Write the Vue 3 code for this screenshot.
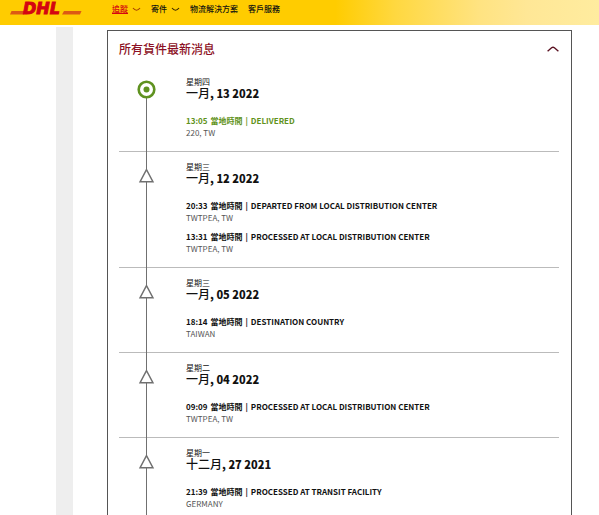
<script setup>
import { ref } from 'vue'

const open = ref(true)

const navItems = [
  { label: '追蹤', menu: true, active: true },
  { label: '寄件', menu: true },
  { label: '物流解決方案' },
  { label: '客戶服務' },
]

const days = [
  {
    weekday: '星期四', month: '一月', rest: ', 13 2022', delivered: true,
    events: [{ time: '13:05', status: 'DELIVERED', place: '220, TW' }],
  },
  {
    weekday: '星期三', month: '一月', rest: ', 12 2022',
    events: [
      { time: '20:33', status: 'DEPARTED FROM LOCAL DISTRIBUTION CENTER', place: 'TWTPEA, TW' },
      { time: '13:31', status: 'PROCESSED AT LOCAL DISTRIBUTION CENTER', place: 'TWTPEA, TW' },
    ],
  },
  {
    weekday: '星期三', month: '一月', rest: ', 05 2022',
    events: [{ time: '18:14', status: 'DESTINATION COUNTRY', place: 'TAIWAN' }],
  },
  {
    weekday: '星期二', month: '一月', rest: ', 04 2022',
    events: [{ time: '09:09', status: 'PROCESSED AT LOCAL DISTRIBUTION CENTER', place: 'TWTPEA, TW' }],
  },
  {
    weekday: '星期一', month: '十二月', rest: ', 27 2021',
    events: [{ time: '21:39', status: 'PROCESSED AT TRANSIT FACILITY', place: 'GERMANY' }],
  },
]
</script>

<template>
  <div class="page">
    <header class="topbar">
      <a class="brand" href="#" aria-label="DHL">
        <svg class="logo" width="72" height="22" viewBox="0 0 72 22" aria-hidden="true">
          <path class="stripe" d="M1.500 11H14V14.400H0Z" />
          <path class="stripe" d="M54 11H71.500L70 14.400H52Z" />
          <text class="logo-text" x="13" y="14">DHL</text>
        </svg>
      </a>
      <nav class="nav">
        <a v-for="item in navItems" :key="item.label" href="#" class="nav-link" :class="{ active: item.active }">
          <span class="nav-label">{{ item.label }}</span>
          <svg v-if="item.menu" class="nav-chevron" width="9" height="6" viewBox="0 0 9 6" aria-hidden="true">
            <path d="M1 2Q4.500 6.500 8 2" />
          </svg>
        </a>
      </nav>
    </header>

    <div class="body">
      <div class="side"></div>
      <main class="card">
        <div class="card-head">
          <h1 class="title">所有貨件最新消息</h1>
          <button class="toggle" type="button" :aria-expanded="open" aria-label="收合" @click="open = !open">
            <svg width="12" height="8" viewBox="0 0 12 8" aria-hidden="true">
              <path d="M.6 6.200L4.600 2.800Q6 1.700 7.400 2.800L11.400 6.200" />
            </svg>
          </button>
        </div>

        <ol v-if="open" class="timeline">
          <li v-for="(day, i) in days" :key="i" class="day" :class="{ delivered: day.delivered }">
            <div class="rail">
              <svg v-if="day.delivered" class="marker" width="19" height="19" viewBox="0 0 19 19" aria-hidden="true">
                <circle class="ring" cx="9.500" cy="9.500" r="7.800" />
                <circle class="dot" cx="9.500" cy="9.500" r="3" />
              </svg>
              <svg v-else class="marker" width="17" height="15" viewBox="0 0 17 15" aria-hidden="true">
                <path class="triangle" d="M8.500 1.600L15 13.800H2Z" />
              </svg>
            </div>
            <div class="content">
              <div class="weekday">{{ day.weekday }}</div>
              <h2 class="date"><span class="month">{{ day.month }}</span>{{ day.rest }}</h2>
              <div class="events">
                <div v-for="event in day.events" :key="event.time" class="event">
                  <div class="status">
                    <span>{{ event.time }}</span>
                    <span>當地時間</span>
                    <span>|</span>
                    <span>{{ event.status }}</span>
                  </div>
                  <div class="place">{{ event.place }}</div>
                </div>
              </div>
            </div>
          </li>
        </ol>
      </main>
    </div>
  </div>
</template>

<style>
body {
  background: #fff;
}
</style>

<style scoped>
.page {
  min-height: 100vh;
  display: flex;
  flex-direction: column;
  font-family: "Noto Sans CJK TC", "Noto Sans", sans-serif;
  color: #111;
}

.topbar {
  display: flex;
  align-items: flex-start;
  height: 25px;
  padding-left: 10px;
  box-sizing: border-box;
  background: linear-gradient(90deg, #fc0 0%, #fc0 56%, #ffd840 66%, #ffe381 80%, #ffe796 88%, #ffec9f 100%);
}

.brand {
  display: block;
}

.logo {
  display: block;
}

.logo-text {
  font-family: "DejaVu Sans", sans-serif;
  font-size: 16px;
  font-weight: 700;
  font-style: italic;
  fill: #d40511;
  stroke: #d40511;
  stroke-width: 1;
}

.stripe {
  fill: #dc5a14;
}

.nav {
  display: flex;
  gap: 10px;
  margin: 3px 0 0 30px;
}

.nav-link {
  display: flex;
  align-items: center;
  gap: 4px;
  height: 12px;
  font-size: 8px;
  line-height: 12px;
  font-weight: 500;
  color: #111;
  text-decoration: none;
}

.nav-link.active .nav-label {
  color: #d40511;
  text-decoration: underline;
}

.nav-chevron path {
  fill: none;
  stroke: #3a2600;
  stroke-width: 1.2;
}

.nav-link.active .nav-chevron path {
  stroke: #a84000;
}

.body {
  display: flex;
  flex: 1;
  padding: 2px 27px 0 56px;
}

.side {
  width: 17px;
  flex: none;
  background: #eee;
}

.card {
  flex: 1;
  margin: 3px 0 0 34px;
  padding: 0 12px 0 11px;
  border: 1px solid #555;
}

.card-head {
  display: flex;
  align-items: center;
  justify-content: space-between;
  height: 35px;
}

.title {
  margin: 0;
  font-size: 12px;
  line-height: 16px;
  font-weight: 500;
  color: #8c1024;
}

.toggle {
  display: flex;
  padding: 0;
  border: 0;
  background: none;
}

.toggle path {
  fill: none;
  stroke: #5a1020;
  stroke-width: 1.4;
}

.timeline {
  margin: 0;
  padding: 0;
  list-style: none;
}

.day {
  display: grid;
  grid-template-columns: 55px 1fr;
  column-gap: 12px;
  background: linear-gradient(#bbb, #bbb) top / 100% 1px no-repeat;
}

.day.delivered {
  background: none;
}

.rail {
  display: flex;
  justify-content: center;
  align-items: flex-start;
  padding-top: 17px;
  background: linear-gradient(#707070, #707070) center / 1px 100% no-repeat;
}

.delivered .rail {
  padding-top: 14px;
  background: linear-gradient(transparent 24px, #707070 24px) center / 1px 100% no-repeat;
}

.marker {
  display: block;
}

.ring {
  fill: #fff;
  stroke: #5f9220;
  stroke-width: 2.6;
}

.dot {
  fill: #5f9220;
}

.triangle {
  fill: #fff;
  stroke: #707070;
  stroke-width: 1.4;
}

.content {
  padding: 12px 0;
}

.weekday {
  font-size: 8px;
  line-height: 8px;
}

.date {
  margin: 0 0 15px;
  font-size: 11px;
  line-height: 14px;
  font-weight: 900;
}

.month {
  font-size: 12px;
  font-weight: 500;
}

.events {
  display: grid;
  row-gap: 7px;
}

.status {
  display: flex;
  gap: 3px;
  font-size: 8px;
  line-height: 12px;
  font-weight: 700;
}

.delivered .status {
  color: #5f9220;
}

.place {
  font-size: 8px;
  line-height: 12px;
  color: #555;
}
</style>
